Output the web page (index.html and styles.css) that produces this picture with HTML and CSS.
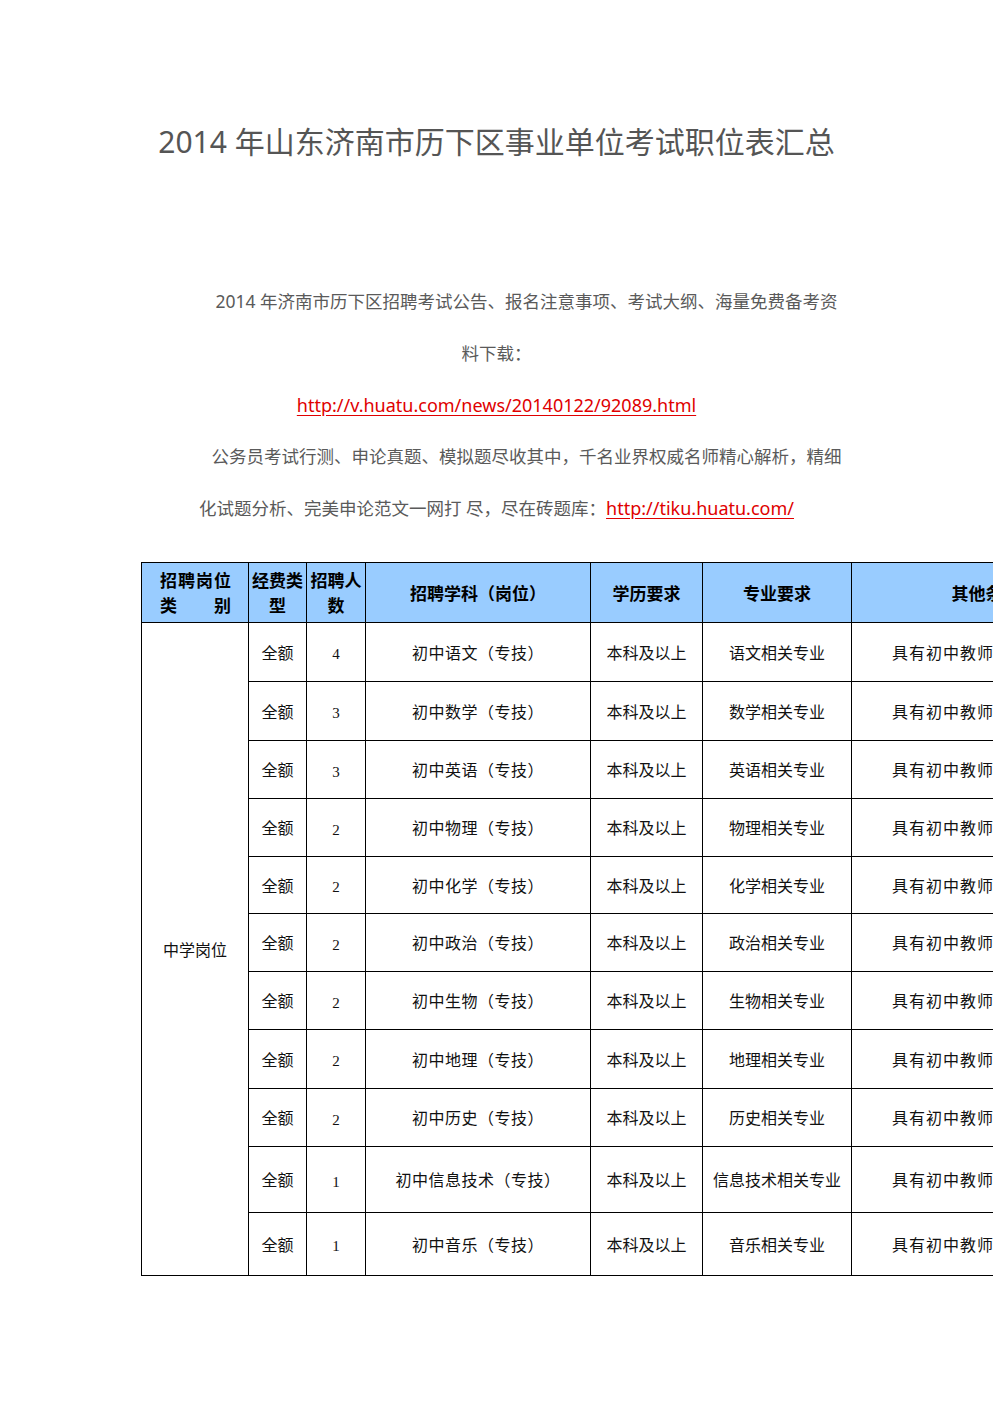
FILE: index.html
```html
<!DOCTYPE html>
<html lang="zh-CN">
<head>
<meta charset="utf-8">
<title>2014年山东济南市历下区事业单位考试职位表汇总</title>
<link rel="stylesheet" href="styles.css">
</head>
<body>
<div class="page">
  <h1 class="title">2014 年山东济南市历下区事业单位考试职位表汇总</h1>

  <div class="intro">
    <p class="lead">2014 年济南市历下区招聘考试公告、报名注意事项、考试大纲、海量免费备考资<br>料下载：</p>
    <p class="link-line"><a class="red-link" href="#">http://v.huatu.com/news/20140122/92089.html</a></p>
    <p class="lead">公务员考试行测、申论真题、模拟题尽收其中，千名业界权威名师精心解析，精细<br>化试题分析、完美申论范文一网打&nbsp;尽，尽在砖题库：<a class="red-link" href="#">http://tiku.huatu.com/</a></p>
  </div>

  <div class="table-wrap">
    <table class="jobs">
      <colgroup>
        <col class="c-cat">
        <col class="c-fund">
        <col class="c-num">
        <col class="c-subj">
        <col class="c-edu">
        <col class="c-major">
        <col class="c-other">
      </colgroup>
      <thead>
        <tr class="head">
          <th class="cat-head"><span class="jl">招聘岗位</span><span class="jl">类别</span></th>
          <th class="narrow">经费类型</th>
          <th class="narrow">招聘人数</th>
          <th>招聘学科（岗位）</th>
          <th>学历要求</th>
          <th>专业要求</th>
          <th>其他条件</th>
        </tr>
      </thead>
      <tbody>
        <tr class="h59">
          <td rowspan="11" class="cat">中学岗位</td>
          <td>全额</td><td class="num">4</td><td class="sp">初中语文（专技）</td><td>本科及以上</td><td>语文相关专业</td><td class="other">具有初中教师资格及以上</td>
        </tr>
        <tr class="h59">
          <td>全额</td><td class="num">3</td><td class="sp">初中数学（专技）</td><td>本科及以上</td><td>数学相关专业</td><td class="other">具有初中教师资格及以上</td>
        </tr>
        <tr class="h58">
          <td>全额</td><td class="num">3</td><td class="sp">初中英语（专技）</td><td>本科及以上</td><td>英语相关专业</td><td class="other">具有初中教师资格及以上</td>
        </tr>
        <tr class="h58">
          <td>全额</td><td class="num">2</td><td class="sp">初中物理（专技）</td><td>本科及以上</td><td>物理相关专业</td><td class="other">具有初中教师资格及以上</td>
        </tr>
        <tr class="h57">
          <td>全额</td><td class="num">2</td><td class="sp">初中化学（专技）</td><td>本科及以上</td><td>化学相关专业</td><td class="other">具有初中教师资格及以上</td>
        </tr>
        <tr class="h58">
          <td>全额</td><td class="num">2</td><td class="sp">初中政治（专技）</td><td>本科及以上</td><td>政治相关专业</td><td class="other">具有初中教师资格及以上</td>
        </tr>
        <tr class="h58">
          <td>全额</td><td class="num">2</td><td class="sp">初中生物（专技）</td><td>本科及以上</td><td>生物相关专业</td><td class="other">具有初中教师资格及以上</td>
        </tr>
        <tr class="h59">
          <td>全额</td><td class="num">2</td><td class="sp">初中地理（专技）</td><td>本科及以上</td><td>地理相关专业</td><td class="other">具有初中教师资格及以上</td>
        </tr>
        <tr class="h58">
          <td>全额</td><td class="num">2</td><td class="sp">初中历史（专技）</td><td>本科及以上</td><td>历史相关专业</td><td class="other">具有初中教师资格及以上</td>
        </tr>
        <tr class="h66">
          <td>全额</td><td class="num">1</td><td class="sp">初中信息技术（专技）</td><td>本科及以上</td><td>信息技术相关专业</td><td class="other">具有初中教师资格及以上</td>
        </tr>
        <tr class="h63">
          <td>全额</td><td class="num">1</td><td class="sp">初中音乐（专技）</td><td>本科及以上</td><td>音乐相关专业</td><td class="other">具有初中教师资格及以上</td>
        </tr>
      </tbody>
    </table>
  </div>
</div>
</body>
</html>
```

FILE: styles.css
```css
html, body {
  margin: 0;
  padding: 0;
  background: #fff;
  overflow-x: hidden;
}

.page {
  width: 993px;
  overflow: hidden;
  padding-bottom: 120px;
}

.title {
  margin: 122px 0 0;
  font-family: "Noto Sans", "Noto Sans CJK SC", sans-serif;
  font-weight: 400;
  font-size: 30px;
  line-height: 40px;
  color: #555;
  text-align: center;
}

.intro {
  margin-top: 114px;
  font-family: "Noto Sans", "Noto Sans CJK SC", sans-serif;
  font-size: 17.5px;
  line-height: 51.75px;
  color: #5a5a5a;
  text-align: center;
}

.intro p {
  margin: 0;
}

.lead {
  text-indent: 60px;
}

.red-link {
  font-size: 18px;
  color: #e00000;
  text-decoration: underline;
  text-decoration-color: #e00000;
  text-underline-offset: 3px;
}

.table-wrap {
  margin-top: 27px;
  padding-left: 141px;
}

.jobs {
  border-collapse: collapse;
  table-layout: fixed;
  width: 978px;
  font-family: "Noto Sans CJK SC", sans-serif;
  font-size: 16px;
  color: #111;
}

.c-cat { width: 107px; }
.c-fund { width: 58px; }
.c-num { width: 59px; }
.c-subj { width: 225px; }
.c-edu { width: 112px; }
.c-major { width: 149px; }
.c-other { width: 268px; }

.jobs th,
.jobs td {
  border: 1px solid #000;
  padding: 0;
  text-align: center;
  vertical-align: middle;
}

.jobs th {
  background: #99ccff;
  color: #000;
  font-weight: 700;
  font-size: 17px;
  line-height: 25px;
  height: 59px;
}

.jobs th.narrow {
  padding: 0 1px;
}

.cat-head {
  padding: 0 17px 0 18px !important;
}

.jl {
  display: block;
  text-align: justify;
  text-align-last: justify;
}

.jobs td {
  line-height: 22px;
}

.jobs td.sp {
  letter-spacing: 0.5px;
}

.jobs td.other {
  letter-spacing: 1px;
}

.jobs td.num {
  font-family: "Liberation Serif", serif;
  font-size: 15px;
  padding-top: 5px;
}

.h57 { height: 57px; }
.h58 { height: 58px; }
.h59 { height: 59px; }
.h63 { height: 63px; }
.h66 { height: 66px; }
```
